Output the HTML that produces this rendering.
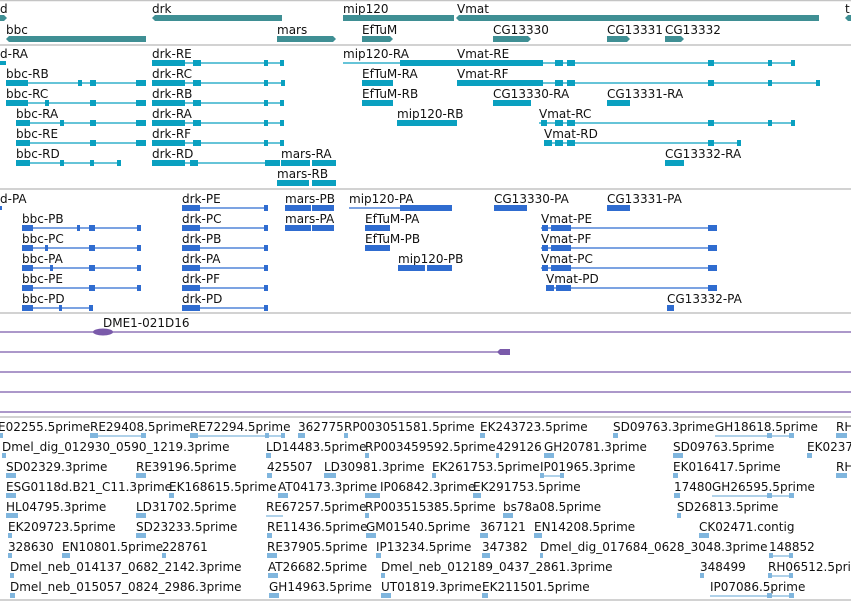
<!DOCTYPE html>
<html><head><meta charset="utf-8"><style>
html,body{margin:0;padding:0;background:#fff;width:851px;height:601px;overflow:hidden}
svg{display:block}
text{font-family:"DejaVu Sans","Liberation Sans",sans-serif;font-size:12px;fill:#111}
.g{fill:#3f8f94}.t{fill:#0aa0c0}.p{fill:#2f6cd0}.e{fill:#80b6de}
.tl{stroke:#0aa0c0;stroke-width:1.2}.pl{stroke:#2f6cd0;stroke-width:1.2}.el{stroke:#80b6de;stroke-width:1.2}
.sep{stroke:#c4c4c4;stroke-width:1.5}.pu{stroke:#7a5aaa;stroke-width:1.3}
</style></head><body>
<svg width="851" height="601" viewBox="0 0 851 601" xmlns="http://www.w3.org/2000/svg">
<line class="sep" x1="0" y1="0.5" x2="851" y2="0.5"/>
<line class="sep" x1="0" y1="45" x2="851" y2="45"/>
<line class="sep" x1="0" y1="189" x2="851" y2="189"/>
<line class="sep" x1="0" y1="313" x2="851" y2="313"/>
<line class="sep" x1="0" y1="417" x2="851" y2="417"/>
<line class="sep" x1="0" y1="600" x2="851" y2="600"/>

<!-- genes -->
<text x="0" y="13">d</text><text x="152" y="13">drk</text><text x="343" y="13">mip120</text><text x="457" y="13">Vmat</text><text x="845" y="13">t</text>
<polygon class="g" points="0,15 4,15 7,18 4,21 0,21"/>
<polygon class="g" points="155,15 282,15 282,21 155,21 152,18"/>
<rect class="g" x="343" y="15" width="111" height="6"/>
<polygon class="g" points="459,15 819,15 819,21 459,21 456,18"/>
<polygon class="g" points="848,15 851,15 851,21 848,21 845,18"/>
<text x="6" y="34">bbc</text><text x="277" y="34">mars</text><text x="362" y="34">EfTuM</text><text x="493" y="34">CG13330</text><text x="607" y="34">CG13331</text><text x="665" y="34">CG13332</text>
<polygon class="g" points="9,36 146,36 146,42 9,42 6,39"/>
<polygon class="g" points="277,36 333,36 336,39 333,42 277,42"/>
<polygon class="g" points="362,36 390,36 393,39 390,42 362,42"/>
<polygon class="g" points="493,36 528,36 531,39 528,42 493,42"/>
<polygon class="g" points="607,36 627,36 630,39 627,42 607,42"/>
<polygon class="g" points="665,36 681,36 684,39 681,42 665,42"/>

<!-- transcripts -->
<g>
<text x="0" y="58">d-RA</text><text x="152" y="58">drk-RE</text><text x="343" y="58">mip120-RA</text><text x="457" y="58">Vmat-RE</text>
<rect class="t" x="0" y="61" width="6" height="4"/>
<line class="tl" x1="152" y1="63" x2="284" y2="63"/><rect class="t" x="152" y="60" width="33" height="6"/><rect class="t" x="193" y="60" width="8" height="6"/><rect class="t" x="264" y="60" width="4" height="6"/><rect class="t" x="280" y="60" width="4" height="6"/>
<line class="tl" x1="343" y1="63" x2="400" y2="63"/><rect class="t" x="400" y="60" width="57" height="6"/>
<line class="tl" x1="425" y1="63" x2="795" y2="63"/><rect class="t" x="425" y="60" width="118" height="6"/><rect class="t" x="555" y="60" width="8" height="6"/><rect class="t" x="567" y="60" width="8" height="6"/><rect class="t" x="708" y="60" width="6" height="6"/><rect class="t" x="768" y="60" width="4" height="6"/><rect class="t" x="791" y="60" width="4" height="6"/>

<text x="6" y="78">bbc-RB</text><text x="152" y="78">drk-RC</text><text x="362" y="78">EfTuM-RA</text><text x="457" y="78">Vmat-RF</text>
<line class="tl" x1="6" y1="83" x2="146" y2="83"/><rect class="t" x="6" y="80" width="22" height="6"/><rect class="t" x="78" y="80" width="4" height="6"/><rect class="t" x="90" y="80" width="6" height="6"/><rect class="t" x="136" y="80" width="10" height="6"/>
<line class="tl" x1="152" y1="83" x2="285" y2="83"/><rect class="t" x="152" y="80" width="33" height="6"/><rect class="t" x="193" y="80" width="8" height="6"/><rect class="t" x="264" y="80" width="4" height="6"/><rect class="t" x="281" y="80" width="4" height="6"/>
<rect class="t" x="362" y="80" width="31" height="6"/>
<line class="tl" x1="457" y1="83" x2="820" y2="83"/><rect class="t" x="457" y="80" width="86" height="6"/><rect class="t" x="555" y="80" width="8" height="6"/><rect class="t" x="567" y="80" width="8" height="6"/><rect class="t" x="708" y="80" width="6" height="6"/><rect class="t" x="768" y="80" width="4" height="6"/><rect class="t" x="816" y="80" width="4" height="6"/>

<text x="6" y="98">bbc-RC</text><text x="152" y="98">drk-RB</text><text x="362" y="98">EfTuM-RB</text><text x="493" y="98">CG13330-RA</text><text x="607" y="98">CG13331-RA</text>
<line class="tl" x1="6" y1="103" x2="146" y2="103"/><rect class="t" x="6" y="100" width="22" height="6"/><rect class="t" x="45" y="100" width="4" height="6"/><rect class="t" x="90" y="100" width="6" height="6"/><rect class="t" x="136" y="100" width="10" height="6"/>
<line class="tl" x1="152" y1="103" x2="284" y2="103"/><rect class="t" x="152" y="100" width="33" height="6"/><rect class="t" x="193" y="100" width="8" height="6"/><rect class="t" x="264" y="100" width="4" height="6"/><rect class="t" x="280" y="100" width="4" height="6"/>
<rect class="t" x="362" y="100" width="31" height="6"/>
<rect class="t" x="493" y="100" width="38" height="6"/>
<rect class="t" x="607" y="100" width="23" height="6"/>

<text x="16" y="118">bbc-RA</text><text x="152" y="118">drk-RA</text><text x="397" y="118">mip120-RB</text><text x="539" y="118">Vmat-RC</text>
<line class="tl" x1="16" y1="123" x2="146" y2="123"/><rect class="t" x="16" y="120" width="14" height="6"/><rect class="t" x="60" y="120" width="4" height="6"/><rect class="t" x="90" y="120" width="6" height="6"/><rect class="t" x="136" y="120" width="10" height="6"/>
<line class="tl" x1="152" y1="123" x2="284" y2="123"/><rect class="t" x="152" y="120" width="33" height="6"/><rect class="t" x="193" y="120" width="8" height="6"/><rect class="t" x="264" y="120" width="4" height="6"/><rect class="t" x="280" y="120" width="4" height="6"/>
<rect class="t" x="397" y="120" width="60" height="6"/>
<line class="tl" x1="539" y1="123" x2="795" y2="123"/><rect class="t" x="541" y="120" width="6" height="6"/><rect class="t" x="555" y="120" width="8" height="6"/><rect class="t" x="567" y="120" width="8" height="6"/><rect class="t" x="708" y="120" width="6" height="6"/><rect class="t" x="768" y="120" width="4" height="6"/><rect class="t" x="791" y="120" width="4" height="6"/>

<text x="16" y="138">bbc-RE</text><text x="152" y="138">drk-RF</text><text x="544" y="138">Vmat-RD</text>
<line class="tl" x1="16" y1="143" x2="146" y2="143"/><rect class="t" x="16" y="140" width="14" height="6"/><rect class="t" x="90" y="140" width="6" height="6"/><rect class="t" x="136" y="140" width="10" height="6"/>
<line class="tl" x1="152" y1="143" x2="284" y2="143"/><rect class="t" x="152" y="140" width="33" height="6"/><rect class="t" x="193" y="140" width="8" height="6"/><rect class="t" x="264" y="140" width="4" height="6"/><rect class="t" x="280" y="140" width="4" height="6"/>
<line class="tl" x1="544" y1="143" x2="741" y2="143"/><rect class="t" x="544" y="140" width="8" height="6"/><rect class="t" x="555" y="140" width="8" height="6"/><rect class="t" x="567" y="140" width="8" height="6"/><rect class="t" x="708" y="140" width="6" height="6"/><rect class="t" x="737" y="140" width="4" height="6"/>

<text x="16" y="158">bbc-RD</text><text x="152" y="158">drk-RD</text><text x="281" y="158">mars-RA</text><text x="665" y="158">CG13332-RA</text>
<line class="tl" x1="16" y1="163" x2="120" y2="163"/><rect class="t" x="16" y="160" width="14" height="6"/><rect class="t" x="60" y="160" width="4" height="6"/><rect class="t" x="90" y="160" width="4" height="6"/><rect class="t" x="117" y="160" width="4" height="6"/>
<line class="tl" x1="152" y1="163" x2="265" y2="163"/><rect class="t" x="152" y="160" width="33" height="6"/><rect class="t" x="190" y="160" width="8" height="6"/><rect class="t" x="265" y="160" width="15" height="6"/><rect class="t" x="281" y="160" width="29" height="6"/><rect class="t" x="312" y="160" width="24" height="6"/>
<rect class="t" x="665" y="160" width="19" height="6"/>

<text x="277" y="178">mars-RB</text>
<rect class="t" x="277" y="180" width="32" height="6"/><rect class="t" x="312" y="180" width="24" height="6"/>
</g>

<!-- proteins -->
<g>
<text x="0" y="203">d-PA</text><text x="182" y="203">drk-PE</text><text x="285" y="203">mars-PB</text><text x="349" y="203">mip120-PA</text><text x="494" y="203">CG13330-PA</text><text x="607" y="203">CG13331-PA</text>
<rect class="p" x="0" y="206" width="2" height="4"/>
<line class="pl" x1="182" y1="208" x2="268" y2="208"/><rect class="p" x="182" y="205" width="18" height="6"/><rect class="p" x="264" y="205" width="4" height="6"/>
<rect class="p" x="285" y="205" width="26" height="6"/><rect class="p" x="312" y="205" width="22" height="6"/>
<line class="pl" x1="349" y1="208" x2="400" y2="208"/><rect class="p" x="400" y="205" width="52" height="6"/>
<rect class="p" x="494" y="205" width="33" height="6"/>
<rect class="p" x="607" y="205" width="23" height="6"/>

<text x="22" y="223">bbc-PB</text><text x="182" y="223">drk-PC</text><text x="285" y="223">mars-PA</text><text x="365" y="223">EfTuM-PA</text><text x="541" y="223">Vmat-PE</text>
<text x="22" y="243">bbc-PC</text><text x="182" y="243">drk-PB</text><text x="365" y="243">EfTuM-PB</text><text x="541" y="243">Vmat-PF</text>
<text x="22" y="263">bbc-PA</text><text x="182" y="263">drk-PA</text><text x="398" y="263">mip120-PB</text><text x="541" y="263">Vmat-PC</text>
<text x="22" y="283">bbc-PE</text><text x="182" y="283">drk-PF</text><text x="546" y="283">Vmat-PD</text>
<text x="22" y="303">bbc-PD</text><text x="182" y="303">drk-PD</text><text x="667" y="303">CG13332-PA</text>
<g>
<line class="pl" x1="22" y1="228" x2="140" y2="228"/><line class="pl" x1="22" y1="248" x2="140" y2="248"/><line class="pl" x1="22" y1="268" x2="140" y2="268"/><line class="pl" x1="22" y1="288" x2="140" y2="288"/><line class="pl" x1="22" y1="308" x2="92" y2="308"/>
<rect class="p" x="22" y="225" width="11" height="6"/><rect class="p" x="22" y="245" width="11" height="6"/><rect class="p" x="22" y="265" width="11" height="6"/><rect class="p" x="22" y="285" width="11" height="6"/><rect class="p" x="22" y="305" width="11" height="6"/>
<rect class="p" x="77" y="225" width="3" height="6"/><rect class="p" x="89" y="225" width="6" height="6"/><rect class="p" x="137" y="225" width="4" height="6"/>
<rect class="p" x="45" y="245" width="3" height="6"/><rect class="p" x="89" y="245" width="6" height="6"/><rect class="p" x="137" y="245" width="4" height="6"/>
<rect class="p" x="50" y="265" width="3" height="6"/><rect class="p" x="89" y="265" width="6" height="6"/><rect class="p" x="137" y="265" width="4" height="6"/>
<rect class="p" x="89" y="285" width="6" height="6"/><rect class="p" x="137" y="285" width="4" height="6"/>
<rect class="p" x="59" y="305" width="3" height="6"/><rect class="p" x="89" y="305" width="4" height="6"/>
<line class="pl" x1="182" y1="228" x2="268" y2="228"/><line class="pl" x1="182" y1="248" x2="268" y2="248"/><line class="pl" x1="182" y1="268" x2="268" y2="268"/><line class="pl" x1="182" y1="288" x2="268" y2="288"/><line class="pl" x1="182" y1="308" x2="268" y2="308"/>
<rect class="p" x="182" y="225" width="18" height="6"/><rect class="p" x="182" y="245" width="18" height="6"/><rect class="p" x="182" y="265" width="18" height="6"/><rect class="p" x="182" y="285" width="18" height="6"/><rect class="p" x="182" y="305" width="18" height="6"/>
<rect class="p" x="264" y="225" width="4" height="6"/><rect class="p" x="264" y="245" width="4" height="6"/><rect class="p" x="264" y="265" width="4" height="6"/><rect class="p" x="264" y="285" width="4" height="6"/><rect class="p" x="264" y="305" width="4" height="6"/>
<rect class="p" x="285" y="225" width="26" height="6"/><rect class="p" x="312" y="225" width="22" height="6"/>
<rect class="p" x="365" y="225" width="25" height="6"/><rect class="p" x="365" y="245" width="25" height="6"/>
<rect class="p" x="398" y="265" width="27" height="6"/><rect class="p" x="427" y="265" width="25" height="6"/>
<line class="pl" x1="541" y1="228" x2="717" y2="228"/><line class="pl" x1="541" y1="248" x2="717" y2="248"/><line class="pl" x1="541" y1="268" x2="717" y2="268"/><line class="pl" x1="546" y1="288" x2="717" y2="288"/>
<rect class="p" x="542" y="225" width="6" height="6"/><rect class="p" x="551" y="225" width="20" height="6"/><rect class="p" x="708" y="225" width="9" height="6"/>
<rect class="p" x="542" y="245" width="6" height="6"/><rect class="p" x="551" y="245" width="20" height="6"/><rect class="p" x="708" y="245" width="9" height="6"/>
<rect class="p" x="542" y="265" width="6" height="6"/><rect class="p" x="551" y="265" width="20" height="6"/><rect class="p" x="708" y="265" width="9" height="6"/>
<rect class="p" x="546" y="285" width="8" height="6"/><rect class="p" x="556" y="285" width="15" height="6"/><rect class="p" x="708" y="285" width="9" height="6"/>
<rect class="p" x="667" y="305" width="7" height="6"/>
</g>
</g>

<!-- purple clone track -->
<text x="103" y="327">DME1-021D16</text>
<line class="pu" x1="0" y1="332" x2="851" y2="332"/>
<ellipse cx="103" cy="332" rx="10" ry="3.5" fill="#7a5aaa"/>
<line class="pu" x1="0" y1="352" x2="505" y2="352"/>
<polygon points="500,349 510,349 510,355 500,355 497,352" fill="#7a5aaa"/>
<line class="pu" x1="0" y1="372" x2="851" y2="372"/>
<line class="pu" x1="0" y1="392" x2="851" y2="392"/>
<line class="pu" x1="0" y1="412" x2="851" y2="412"/>

<!-- ESTs -->
<g>
<text x="-2" y="431">E02255.5prime</text><text x="90" y="431">RE29408.5prime</text><text x="190" y="431">RE72294.5prime</text><text x="298" y="431">362775</text><text x="344" y="431">RP003051581.5prime</text><text x="480" y="431">EK243723.5prime</text><text x="613" y="431">SD09763.3prime</text><text x="715" y="431">GH18618.5prime</text><text x="836" y="431">RH</text>
<text x="2" y="451">Dmel_dig_012930_0590_1219.3prime</text><text x="266" y="451">LD14483.5prime</text><text x="365" y="451">RP003459592.5prime</text><text x="496" y="451">429126</text><text x="544" y="451">GH20781.3prime</text><text x="673" y="451">SD09763.5prime</text><text x="807" y="451">EK0237</text>
<text x="6" y="471">SD02329.3prime</text><text x="136" y="471">RE39196.5prime</text><text x="267" y="471">425507</text><text x="324" y="471">LD30981.3prime</text><text x="432" y="471">EK261753.5prime</text><text x="540" y="471">IP01965.3prime</text><text x="673" y="471">EK016417.5prime</text><text x="836" y="471">RH</text>
<text x="6" y="491">ESG0118d.B21_C11.3prime</text><text x="169" y="491">EK168615.5prime</text><text x="278" y="491">AT04173.3prime</text><text x="380" y="491">IP06842.3prime</text><text x="473" y="491">EK291753.5prime</text><text x="674" y="491">17480</text><text x="712" y="491">GH26595.5prime</text>
<text x="6" y="511">HL04795.3prime</text><text x="136" y="511">LD31702.5prime</text><text x="266" y="511">RE67257.5prime</text><text x="365" y="511">RP003515385.5prime</text><text x="503" y="511">bs78a08.5prime</text><text x="677" y="511">SD26813.5prime</text>
<text x="8" y="531">EK209723.5prime</text><text x="136" y="531">SD23233.5prime</text><text x="267" y="531">RE11436.5prime</text><text x="366" y="531">GM01540.5prime</text><text x="480" y="531">367121</text><text x="534" y="531">EN14208.5prime</text><text x="699" y="531">CK02471.contig</text>
<text x="8" y="551">328630</text><text x="62" y="551">EN10801.5prime</text><text x="162" y="551">228761</text><text x="267" y="551">RE37905.5prime</text><text x="376" y="551">IP13234.5prime</text><text x="482" y="551">347382</text><text x="540" y="551">Dmel_dig_017684_0628_3048.3prime</text><text x="769" y="551">148852</text>
<text x="10" y="571">Dmel_neb_014137_0682_2142.3prime</text><text x="268" y="571">AT26682.5prime</text><text x="381" y="571">Dmel_neb_012189_0437_2861.3prime</text><text x="700" y="571">348499</text><text x="768" y="571">RH06512.5prime</text>
<text x="10" y="591">Dmel_neb_015057_0824_2986.3prime</text><text x="269" y="591">GH14963.5prime</text><text x="381" y="591">UT01819.3prime</text><text x="482" y="591">EK211501.5prime</text><text x="710" y="591">IP07086.5prime</text>
<!-- EST glyphs -->
<rect class="e" x="0" y="433" width="3" height="5"/><line class="el" x1="90" y1="436" x2="146" y2="436"/><rect class="e" x="90" y="433" width="8" height="5"/><rect class="e" x="141" y="433" width="5" height="5"/>
<line class="el" x1="190" y1="436" x2="285" y2="436"/><rect class="e" x="190" y="433" width="8" height="5"/><rect class="e" x="265" y="433" width="4" height="5"/><rect class="e" x="281" y="433" width="4" height="5"/>
<rect class="e" x="298" y="433" width="7" height="5"/><rect class="e" x="344" y="433" width="4" height="5"/><rect class="e" x="480" y="433" width="5" height="5"/><rect class="e" x="613" y="433" width="5" height="5"/>
<line class="el" x1="715" y1="436" x2="793" y2="436"/><rect class="e" x="767" y="433" width="5" height="5"/><rect class="e" x="789" y="433" width="5" height="5"/><rect class="e" x="836" y="433" width="11" height="5"/>
<rect class="e" x="2" y="453" width="4" height="5"/><rect class="e" x="266" y="453" width="5" height="5"/><rect class="e" x="365" y="453" width="4" height="5"/><rect class="e" x="496" y="453" width="3" height="5"/><rect class="e" x="544" y="453" width="10" height="5"/><rect class="e" x="673" y="453" width="10" height="5"/><rect class="e" x="807" y="453" width="5" height="5"/>
<rect class="e" x="6" y="473" width="10" height="5"/><rect class="e" x="136" y="473" width="10" height="5"/><rect class="e" x="267" y="473" width="5" height="5"/><rect class="e" x="324" y="473" width="12" height="5"/><rect class="e" x="432" y="473" width="4" height="5"/><line class="el" x1="540" y1="476" x2="563" y2="476"/><rect class="e" x="540" y="473" width="4" height="5"/><rect class="e" x="560" y="473" width="4" height="5"/><rect class="e" x="673" y="473" width="5" height="5"/><rect class="e" x="836" y="473" width="11" height="5"/>
<rect class="e" x="6" y="493" width="10" height="5"/><rect class="e" x="169" y="493" width="5" height="5"/><rect class="e" x="278" y="493" width="10" height="5"/><rect class="e" x="365" y="493" width="15" height="5"/><rect class="e" x="473" y="493" width="8" height="5"/><rect class="e" x="674" y="493" width="6" height="5"/><line class="el" x1="712" y1="496" x2="793" y2="496"/><rect class="e" x="767" y="493" width="5" height="5"/><rect class="e" x="789" y="493" width="5" height="5"/>
<rect class="e" x="6" y="513" width="12" height="5"/><rect class="e" x="136" y="513" width="10" height="5"/><line class="el" x1="266" y1="516" x2="283" y2="516"/><rect class="e" x="365" y="513" width="4" height="5"/><rect class="e" x="503" y="513" width="10" height="5"/><rect class="e" x="677" y="513" width="4" height="5"/>
<rect class="e" x="8" y="533" width="4" height="5"/><rect class="e" x="136" y="533" width="10" height="5"/><rect class="e" x="267" y="533" width="5" height="5"/><rect class="e" x="366" y="533" width="10" height="5"/><rect class="e" x="480" y="533" width="8" height="5"/><rect class="e" x="534" y="533" width="8" height="5"/><rect class="e" x="699" y="533" width="10" height="5"/>
<rect class="e" x="8" y="553" width="4" height="5"/><rect class="e" x="62" y="553" width="8" height="5"/><rect class="e" x="162" y="553" width="4" height="5"/><rect class="e" x="267" y="553" width="10" height="5"/><rect class="e" x="376" y="553" width="5" height="5"/><rect class="e" x="482" y="553" width="8" height="5"/><rect class="e" x="540" y="553" width="3" height="5"/><line class="el" x1="769" y1="556" x2="793" y2="556"/><rect class="e" x="769" y="553" width="4" height="5"/><rect class="e" x="789" y="553" width="4" height="5"/>
<rect class="e" x="10" y="573" width="4" height="5"/><rect class="e" x="268" y="573" width="10" height="5"/><rect class="e" x="381" y="573" width="4" height="5"/><rect class="e" x="700" y="573" width="4" height="5"/><line class="el" x1="768" y1="576" x2="793" y2="576"/><rect class="e" x="768" y="573" width="4" height="5"/><rect class="e" x="789" y="573" width="4" height="5"/>
<rect class="e" x="10" y="593" width="5" height="5"/><rect class="e" x="269" y="593" width="10" height="5"/><rect class="e" x="381" y="593" width="10" height="5"/><rect class="e" x="482" y="593" width="6" height="5"/><line class="el" x1="710" y1="596" x2="793" y2="596"/><rect class="e" x="767" y="593" width="5" height="5"/><rect class="e" x="789" y="593" width="5" height="5"/>
</g>
</svg>
</body></html>
